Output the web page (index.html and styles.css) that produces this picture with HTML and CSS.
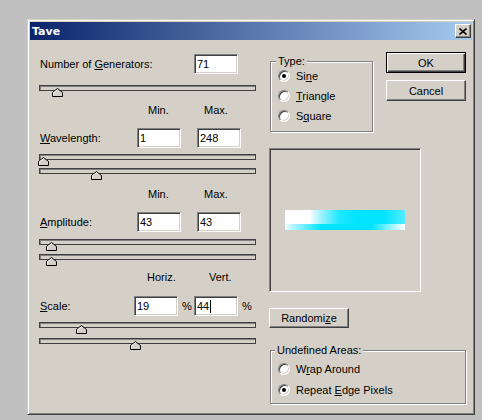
FILE: index.html
```html
<!DOCTYPE html>
<html>
<head>
<meta charset="utf-8">
<link rel="stylesheet" href="styles.css">
</head>
<body>
<div class="dialog">
  <div class="titlebar">
    <span class="title">Tave</span>
    <span class="close"><svg width="8" height="7" viewBox="0 0 8 7"><path d="M0.5 0.5 L7.5 6.5 M7.5 0.5 L0.5 6.5" stroke="#000" stroke-width="1.6" fill="none"/></svg></span>
  </div>
  <div class="content">
    <div class="left">
      <div class="row">
        <span class="label lab-gen">Number of <u>G</u>enerators:</span>
        <div class="field">71</div>
      </div>
      <div class="slider sl-gen"><svg class="thumb" style="left:12px" width="11" height="9" viewBox="0 0 11 9"><path d="M0.5 8.5 V4.5 L5.5 0.5 L10.5 4.5 V8.5 Z" fill="#d4d0c8" stroke="#000"/><path d="M1.5 7.5 V4.9 L5.5 1.7" stroke="#fff" fill="none"/></svg></div>

      <div class="head head-min"><span class="h1">Min.</span><span>Max.</span></div>
      <div class="row row-w">
        <span class="label lab-w"><u>W</u>avelength:</span>
        <div class="field">1</div>
        <span class="gap16"></span>
        <div class="field">248</div>
      </div>
      <div class="slider sl-a1"><svg class="thumb" style="left:-2px" width="11" height="9" viewBox="0 0 11 9"><path d="M0.5 8.5 V4.5 L5.5 0.5 L10.5 4.5 V8.5 Z" fill="#d4d0c8" stroke="#000"/><path d="M1.5 7.5 V4.9 L5.5 1.7" stroke="#fff" fill="none"/></svg></div>
      <div class="slider sl-b1"><svg class="thumb" style="left:51px" width="11" height="9" viewBox="0 0 11 9"><path d="M0.5 8.5 V4.5 L5.5 0.5 L10.5 4.5 V8.5 Z" fill="#d4d0c8" stroke="#000"/><path d="M1.5 7.5 V4.9 L5.5 1.7" stroke="#fff" fill="none"/></svg></div>

      <div class="head head-min2"><span class="h1">Min.</span><span>Max.</span></div>
      <div class="row row-a">
        <span class="label lab-w"><u>A</u>mplitude:</span>
        <div class="field">43</div>
        <span class="gap16"></span>
        <div class="field">43</div>
      </div>
      <div class="slider sl-a2"><svg class="thumb" style="left:6px" width="11" height="9" viewBox="0 0 11 9"><path d="M0.5 8.5 V4.5 L5.5 0.5 L10.5 4.5 V8.5 Z" fill="#d4d0c8" stroke="#000"/><path d="M1.5 7.5 V4.9 L5.5 1.7" stroke="#fff" fill="none"/></svg></div>
      <div class="slider sl-b2"><svg class="thumb" style="left:6px" width="11" height="9" viewBox="0 0 11 9"><path d="M0.5 8.5 V4.5 L5.5 0.5 L10.5 4.5 V8.5 Z" fill="#d4d0c8" stroke="#000"/><path d="M1.5 7.5 V4.9 L5.5 1.7" stroke="#fff" fill="none"/></svg></div>

      <div class="head head-hv"><span class="h2">Horiz.</span><span>Vert.</span></div>
      <div class="row row-s">
        <span class="label lab-s"><u>S</u>cale:</span>
        <div class="field">19</div>
        <span class="pct">%</span>
        <div class="field">44<span class="caret"></span></div>
        <span class="pct">%</span>
      </div>
      <div class="slider sl-a3"><svg class="thumb" style="left:36px" width="11" height="9" viewBox="0 0 11 9"><path d="M0.5 8.5 V4.5 L5.5 0.5 L10.5 4.5 V8.5 Z" fill="#d4d0c8" stroke="#000"/><path d="M1.5 7.5 V4.9 L5.5 1.7" stroke="#fff" fill="none"/></svg></div>
      <div class="slider sl-b3"><svg class="thumb" style="left:90px" width="11" height="9" viewBox="0 0 11 9"><path d="M0.5 8.5 V4.5 L5.5 0.5 L10.5 4.5 V8.5 Z" fill="#d4d0c8" stroke="#000"/><path d="M1.5 7.5 V4.9 L5.5 1.7" stroke="#fff" fill="none"/></svg></div>
    </div>

    <div class="right">
      <div class="toprow">
        <div class="group type">
          <span class="legend">Type:</span>
          <div class="opt"><span class="radio on"></span><span>Si<u>n</u>e</span></div>
          <div class="opt"><span class="radio"></span><span><u>T</u>riangle</span></div>
          <div class="opt"><span class="radio"></span><span>S<u>q</u>uare</span></div>
        </div>
        <div class="buttons">
          <div class="btn default">OK</div>
          <div class="btn">Cancel</div>
        </div>
      </div>
      <div class="preview"><div class="wave"></div></div>
      <div class="btn rand">Randomi<u>z</u>e</div>
      <div class="group undef">
        <span class="legend legend-u">Undefined Areas:</span>
        <div class="opt"><span class="radio"></span><span>W<u>r</u>ap Around</span></div>
        <div class="opt"><span class="radio on"></span><span>Repeat <u>E</u>dge Pixels</span></div>
      </div>
    </div>
  </div>
</div>
</body>
</html>
```

FILE: styles.css
```css
* { box-sizing: border-box; }
html, body { margin: 0; padding: 0; }
body {
  background: #c0c0c0;
  width: 482px;
  height: 420px;
  overflow: hidden;
  font-family: "Liberation Sans", Arial, sans-serif;
  font-size: 11px;
  color: #000;
}
.dialog {
  margin: 19px 0 0 27px;
  width: 448px;
  height: 396px;
  background: #d4d0c8;
  border: 1px solid;
  border-color: #d4d0c8 #404040 #404040 #d4d0c8;
  box-shadow: inset 1px 1px #fff, inset -1px -1px #808080;
  padding: 2px;
}
.titlebar {
  height: 18px;
  display: flex;
  align-items: center;
  justify-content: space-between;
  background: linear-gradient(to right, #0a246a, #a6caf0);
  padding-left: 2px;
}
.title {
  color: #fff;
  font-family: "DejaVu Sans", sans-serif;
  font-weight: bold;
  font-size: 11px;
}
.close {
  width: 16px;
  height: 14px;
  margin-right: 1px;
  background: #d4d0c8;
  border: 1px solid;
  border-color: #fff #404040 #404040 #fff;
  box-shadow: inset -1px -1px #808080;
  display: flex;
  align-items: center;
  justify-content: center;
}
.close svg { display: block; }

.content {
  display: flex;
  align-items: flex-start;
  padding-left: 9px;
}
.left { width: 217px; margin-top: 14px; flex: none; }
.row { display: flex; align-items: center; height: 20px; }
.label { padding-left: 1px; flex: none; }
.lab-gen { width: 155px; }
.lab-w { width: 98px; }
.lab-s { width: 95px; }
.field {
  width: 44px;
  height: 20px;
  flex: none;
  background: #fff;
  border: 1px solid;
  border-color: #808080 #fff #fff #808080;
  box-shadow: inset 1px 1px #404040, inset -1px -1px #d4d0c8;
  padding-left: 2px;
  line-height: 18px;
  display: flex;
  align-items: center;
}
.caret { display: inline-block; width: 1px; height: 13px; background: #000; margin-left: 1px; }
.gap16 { width: 16px; flex: none; }
.pct { width: 16px; padding-left: 4px; flex: none; }

.head { display: flex; height: 14px; line-height: 14px; }
.h1 { margin-left: 109px; width: 56px; }
.h2 { margin-left: 108px; width: 62px; }

.slider {
  position: relative;
  height: 6px;
  border: 1px solid #404040;
  border-bottom-color: #404040;
  background: #d4d0c8;
  box-shadow: inset 1px 1px #808080;
}
.thumb { position: absolute; top: 2px; display: block; }

.sl-gen { margin-top: 11px; }
.head-min { margin-top: 12px; }
.row-w { margin-top: 11px; }
.sl-a1 { margin-top: 6px; }
.sl-b1 { margin-top: 8px; }
.head-min2 { margin-top: 13px; }
.row-a { margin-top: 11px; }
.sl-a2 { margin-top: 7px; }
.sl-b2 { margin-top: 9px; }
.head-hv { margin-top: 10px; }
.row-s { margin-top: 12px; }
.sl-a3 { margin-top: 6px; }
.sl-b3 { margin-top: 10px; }

.right { width: 197px; margin-left: 13px; margin-top: 12px; flex: none; }
.toprow { display: flex; align-items: flex-start; }
.group {
  position: relative;
  margin-left: 1px;
  border: 1px solid #808080;
  box-shadow: inset 1px 1px #fff, 1px 1px #fff;
}
.legend {
  position: absolute;
  left: 5px;
  top: -7px;
  padding: 0 2px;
  background: #d4d0c8;
  line-height: 13px;
}
.legend-u { left: 4px; }
.type { width: 103px; height: 71px; margin-top: 9px; padding: 4px 0 0 7px; flex: none; }
.opt { display: flex; align-items: center; height: 20px; }
.radio {
  position: relative;
  width: 12px;
  height: 12px;
  flex: none;
  margin-right: 6px;
  border-radius: 50%;
  background: #fff;
  border: 1px solid;
  border-color: #808080 #fff #fff #808080;
  box-shadow: inset 1px 1px #404040, inset -1px -1px #d4d0c8;
}
.radio.on::after {
  content: "";
  position: absolute;
  left: 3px;
  top: 3px;
  width: 4px;
  height: 4px;
  border-radius: 50%;
  background: #000;
}
.buttons { margin-left: 13px; display: flex; flex-direction: column; gap: 7px; }
.btn {
  width: 80px;
  height: 21px;
  display: flex;
  align-items: center;
  justify-content: center;
  background: #d4d0c8;
  border: 1px solid;
  border-color: #fff #404040 #404040 #fff;
  box-shadow: inset -1px -1px #808080;
}
.btn.default {
  border: 1px solid #000;
  box-shadow: inset 1px 1px #fff, inset -1px -1px #404040, inset -2px -2px #808080;
}
.preview {
  margin-top: 16px;
  width: 152px;
  height: 144px;
  border: 1px solid;
  border-color: #808080 #fff #fff #808080;
  box-shadow: inset 1px 1px #404040, inset -1px -1px #d4d0c8;
  display: flex;
  align-items: center;
  justify-content: center;
}
.wave {
  width: 120px;
  height: 20px;
  background:
    linear-gradient(to right, #f4feff 0%, #b8f6ff 6%, #00e4ff 30%, #00e4ff 72%, #a8f4ff 90%, #ffffff 100%) left bottom / 100% 6px no-repeat,
    linear-gradient(to right, #fff 0%, #fff 20%, #9ff2ff 30%, #20e8ff 45%, #00e4ff 60%, #00e4ff 82%, #50ecff 100%);
}
.rand { margin-top: 16px; height: 20px; }
.undef { width: 196px; height: 54px; margin-top: 22px; padding: 7px 0 0 7px; }
.undef .opt { height: 21px; }
```
